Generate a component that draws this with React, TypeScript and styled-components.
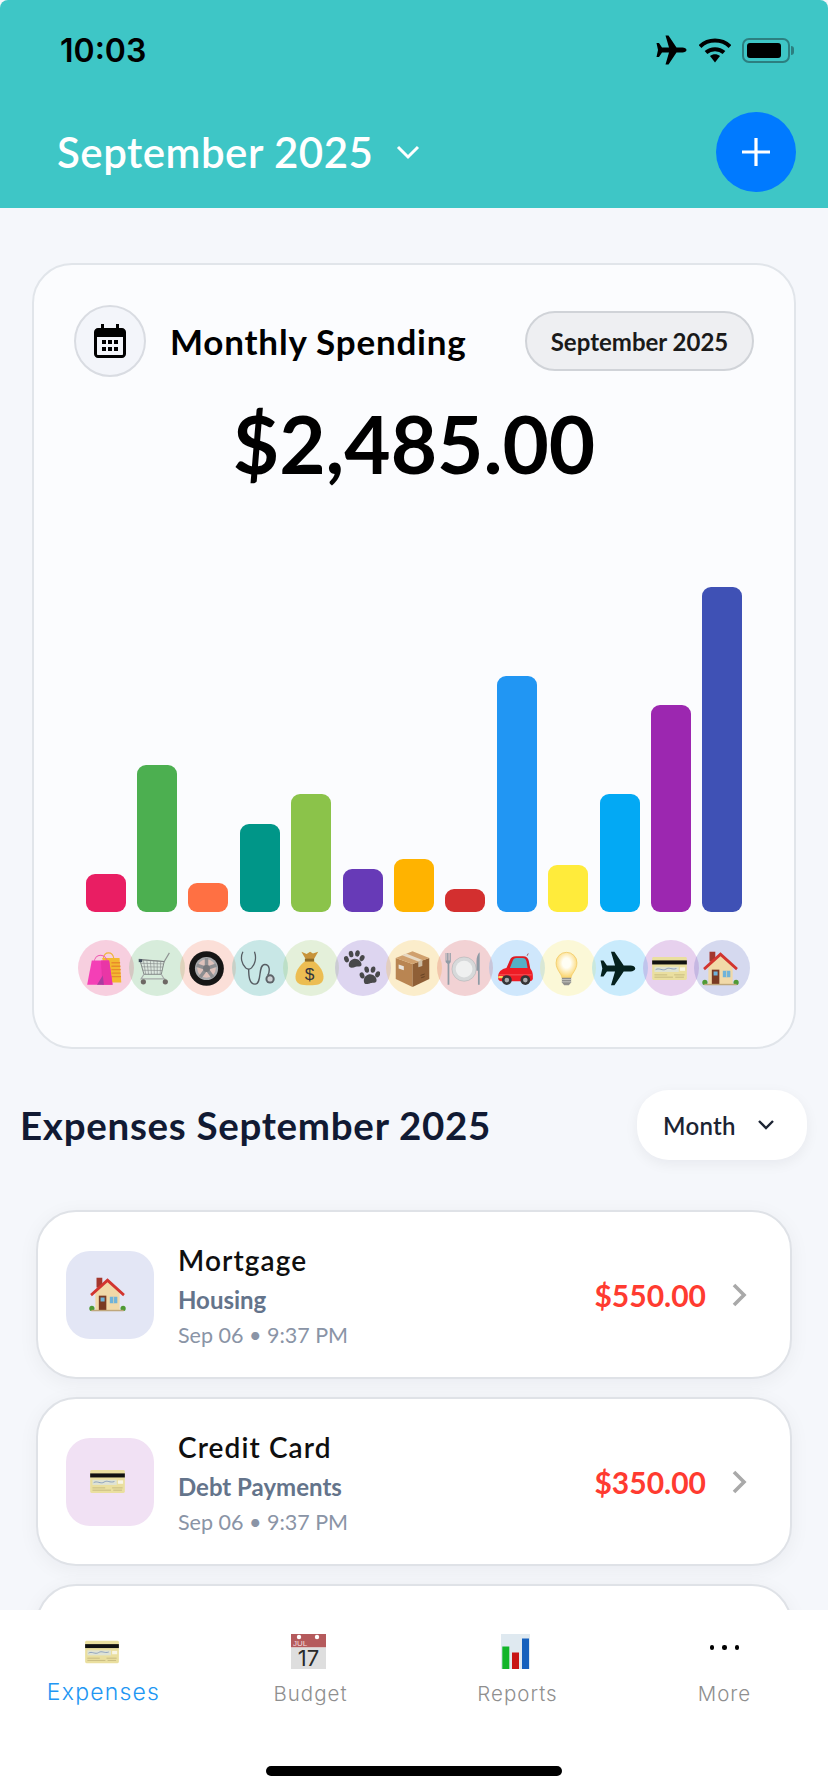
import React from "react";
import styled, { createGlobalStyle } from "styled-components";

const GlobalStyle = createGlobalStyle`
html, body {
    margin: 0;
    padding: 0;
    background: #ffffff;
}
* {
    box-sizing: border-box;
}
`;

const BagsEmoji = () => (
    <svg viewBox="0 0 64 64">
        <path d="M30 14c2-12 16-12 18 0" fill="none" stroke="#efb53a" strokeWidth="1.800" />
        <path d="M28 14h30l3 42H36z" fill="#f3b92f" />
        <path d="M44 22h15M44 28h15.500M44 34h16M44 40h16M44 46h16.500" stroke="#e98a2b" strokeWidth="2.400" />
        <path d="M14 22c1-17 21-17 23 0" fill="none" stroke="#ee58b0" strokeWidth="1.800" />
        <path d="M10 18h30l6 42H2z" fill="#f43fb6" />
        <path d="M26 18h14l6 42H28z" fill="#e936a6" />
        <path d="M26 18l3 26-10 16h12z" fill="#a93d9e" />
    </svg>
);

const CartEmoji = () => (
    <svg viewBox="0 0 64 64">
        <path d="M3 16l44 4 9-15" fill="none" stroke="#8f9393" strokeWidth="2" />
        <path d="M5 17l7 25h30l5-22z" fill="#dfe4e1" fillOpacity=".6" stroke="#777b7b" strokeWidth="1.500" />
        <path d="M11 17l4 25M17 18l3 24M23 18l2 24M29 19l1 23M35 19v23M41 20l-1 22M6 23l40 1M8 29l37 .5M9.500 35l34 .5" stroke="#7f8384" strokeWidth="1" />
        <path d="M3 16h6v5H3z" fill="#3f4a58" />
        <path d="M12 42l-5 8h42M42 42l6 10" fill="none" stroke="#a5a9a9" strokeWidth="2" />
        <circle cx="11" cy="55" r="4.500" fill="#6d6864" />
        <circle cx="49" cy="55" r="4.500" fill="#6d6864" />
    </svg>
);

const WheelEmoji = () => (
    <svg viewBox="0 0 64 64">
        <circle cx="32" cy="32" r="30" fill="#161616" />
        <circle cx="32" cy="32" r="20" fill="#a9abae" />
        <circle cx="32" cy="32" r="16" fill="#f0c9bf" fillOpacity=".75" />
        <path d="M32 32V14M32 32l17-6M32 32l11 15M32 32L21 47M32 32l-17-6" stroke="#8d8f92" strokeWidth="6" />
        <circle cx="32" cy="32" r="6" fill="#77797c" />
    </svg>
);

const StethoscopeEmoji = () => (
    <svg viewBox="0 0 64 64">
        <path d="M5 3C0 13 3 25 10 31c4 3 7 3 10 0 6-6 9-17 5-28" fill="none" stroke="#565c62" strokeWidth="2.200" />
        <path d="M15 33c0 12 1 26 11 26 13 0 4-34 17-34 9 0 9 12 5 19" fill="none" stroke="#565c62" strokeWidth="2.400" />
        <circle cx="52" cy="50" r="8" fill="#5d6368" />
        <circle cx="52" cy="50" r="4.500" fill="#cbd0d3" />
    </svg>
);

const MoneyBagEmoji = () => (
    <svg viewBox="0 0 64 64">
        <path d="M18 3l9 4 6-4 5 3 9-3-8 14H26z" fill="#c7933a" />
        <path d="M25 19h14c11 7 19 21 17 31-2 9-10 11-24 11S10 59 8 50c-2-10 6-24 17-31z" fill="#ecbd52" />
        <path d="M24 15h16v5H24z" fill="#8e6a24" />
        <text x="32" y="52" textAnchor="middle" fontFamily="Liberation Sans, sans-serif" fontSize="30" fill="#33363d">$</text>
    </svg>
);

const PawsEmoji = () => (
    <svg viewBox="0 0 64 64" fill="#48484a">
        <path d="M10 26c0-7 6-11 11-11s12 5 11 11c-1 4-6 2-10 3-5 2-12 3-12-3z" />
        <ellipse cx="6" cy="16" rx="4" ry="5.500" transform="rotate(-20 6 16)" />
        <ellipse cx="14" cy="7" rx="4" ry="5.500" transform="rotate(-10 14 7)" />
        <ellipse cx="25" cy="6" rx="4" ry="5.500" transform="rotate(10 25 6)" />
        <ellipse cx="33" cy="14" rx="4" ry="5.500" transform="rotate(25 33 14)" />
        <path d="M36 53c0-7 6-11 11-11s12 5 11 11c-1 5-6 3-10 4-5 2-12 4-12-4z" />
        <ellipse cx="33" cy="44" rx="4" ry="5.500" transform="rotate(-20 33 44)" />
        <ellipse cx="41" cy="34" rx="4" ry="5.500" transform="rotate(-10 41 34)" />
        <ellipse cx="52" cy="34" rx="4" ry="5.500" transform="rotate(10 52 34)" />
        <ellipse cx="60" cy="42" rx="4" ry="5.500" transform="rotate(25 60 42)" />
    </svg>
);

const BoxEmoji = () => (
    <svg viewBox="0 0 64 64">
        <path d="M32 24L3 14v36l29 14z" fill="#b98552" />
        <path d="M32 24l29-10v36L32 64z" fill="#8f5f36" />
        <path d="M3 14L32 2l29 12-29 10z" fill="#d0a06d" />
        <path d="M14 9l28 11 7-2.500L21 6z" fill="#e7d9c3" />
        <path d="M42 20l7-2.500v10l-7 2.500z" fill="#cdbda5" />
        <path d="M8 25l9 3v7l-9-3z" fill="#e9e4dc" />
        <path d="M46 44l7-2.500M47 48l6-2" stroke="#5f3e22" strokeWidth="1.500" />
    </svg>
);

const PlateEmoji = () => (
    <svg viewBox="0 0 64 64">
        <path d="M1 5h1.500v13h1V5H5v13h1V5h1.500v13h1V5H10v15c0 2-1.500 3-2.500 4v36h-3V24C3 23 1 22 1 20z" fill="#8f9ba5" />
        <circle cx="33" cy="33" r="21" fill="#d7d9da" stroke="#b0b3b5" strokeWidth="1" />
        <circle cx="33" cy="33" r="14.500" fill="#eff0f0" />
        <path d="M60 60h-3V36h-2.500V19c0-6 2-12 5.500-15z" fill="#8f9ba5" />
    </svg>
);

const CarEmoji = () => (
    <svg viewBox="0 0 64 64">
        <path d="M52 10l2-4" stroke="#9a3a3a" strokeWidth="1.400" />
        <path d="M15 34l7-16c2-5 5-7 11-7h12c6 0 9 3 10 8l3 15z" fill="#de1a22" />
        <path d="M22 32l5-13c1-3 3-5 7-5h10c4 0 6 2 7 6l2 12H22z" fill="#55b0c7" />
        <path d="M2 46c0-9 6-13 14-15h36c7 0 10 6 10 14v4c0 3-2 5-5 5H7c-3 0-5-2-5-5z" fill="#ee1c25" />
        <path d="M4 43h56" stroke="#f7696a" strokeWidth="1.400" />
        <rect x="2" y="45" width="9" height="4" rx="1.500" fill="#ffd35a" />
        <circle cx="17" cy="52" r="8.500" fill="#343436" />
        <circle cx="17" cy="52" r="4" fill="#a9abad" />
        <circle cx="49" cy="52" r="8.500" fill="#343436" />
        <circle cx="49" cy="52" r="4" fill="#a9abad" />
    </svg>
);

const BulbEmoji = () => (
    <svg viewBox="0 0 64 64">
        <defs>
            <radialGradient id="bulbGlow" cx="50%" cy="42%" r="55%">
                <stop offset="35%" stopColor="#fffef4" />
                <stop offset="100%" stopColor="#fbd774" />
            </radialGradient>
        </defs>
        <path d="M24 48c0-7-10-13-10-26a18 18 0 0 1 36 0c0 13-10 19-10 26z" fill="url(#bulbGlow)" stroke="#f2cc6a" strokeWidth="1.500" />
        <path d="M24 48h16v8l-4 5h-8l-4-5z" fill="#8f8f8c" />
        <path d="M24 51h16M24 55h16" stroke="#c9c9c6" strokeWidth="1.500" />
    </svg>
);

const PlaneEmoji = ({ fill = "#05211d" }: { fill?: string }) => (
    <svg viewBox="0 0 64 64">
        <path
            fill={fill}
            d="M61 32c0-3-4-5-8-5H41L25 3h-6l7 24H12L6 18H1l3 14-3 14h5l6-9h14l-7 24h6l16-24h12c4 0 8-2 8-5z"
        />
    </svg>
);

const CardEmoji = () => (
    <svg viewBox="0 0 64 64">
        <rect x="2" y="12" width="60" height="40" rx="2.500" fill="#eadf9f" />
        <rect x="2" y="18" width="60" height="7" fill="#111111" />
        <rect x="6" y="29" width="42" height="9" fill="#dfe3d4" />
        <path d="M8 34c6-4 12 3 18-1s10 2 18-1" fill="none" stroke="#7c93b8" strokeWidth="1.400" />
        <rect x="50" y="30" width="9" height="6" fill="#f8f5e4" />
        <path d="M6 43h22M6 47h32M40 43h18M42 47h15" stroke="#c4b67d" strokeWidth="1.500" />
    </svg>
);

const HouseEmoji = () => (
    <svg viewBox="0 0 64 64">
        <rect x="13" y="3" width="10" height="17" fill="#a3372d" />
        <path d="M11 28L32 10l21 18v31H11z" fill="#f1d9a8" />
        <path d="M32 4L2 31l3 4L32 11l27 24 3-4z" fill="#d2352f" />
        <path d="M17 34h13v25H17z" fill="#7a3a22" />
        <path d="M20 37h7v7h-7zM36 36h13v11H36z" fill="#6fb3d9" />
        <path d="M42.500 36v11" stroke="#f1d9a8" strokeWidth="1.200" />
        <circle cx="5" cy="56" r="4.500" fill="#4e9a35" />
        <circle cx="59" cy="56" r="4.500" fill="#4e9a35" />
        <rect x="4" y="58.500" width="56" height="2.500" fill="#bfa77c" />
    </svg>
);

const BudgetCalendarEmoji = () => (
    <svg viewBox="0 0 35 40">
        <rect x="0" y="0" width="35" height="13.500" fill="#b55a5c" />
        <rect x="0" y="13.500" width="35" height="21.500" fill="#dedede" />
        <circle cx="8" cy="3" r="2.200" fill="#ffffff" />
        <circle cx="26" cy="3" r="2.200" fill="#ffffff" />
        <text x="2" y="12" fontFamily="Liberation Sans, sans-serif" fontSize="8" fill="#f3dede">JUL</text>
        <text x="17.500" y="32" textAnchor="middle" fontFamily="Inter, sans-serif" fontSize="22" fill="#2a2a2a">17</text>
    </svg>
);

const ReportsChartEmoji = () => (
    <svg viewBox="0 0 29 35">
        <rect width="29" height="35" fill="#dfe9f0" />
        <rect x="1.300" y="12.500" width="7" height="22.500" fill="#12b52a" />
        <rect x="11" y="18.500" width="7" height="16.500" fill="#c81414" />
        <rect x="21" y="4.500" width="7" height="30.500" fill="#1560bd" />
    </svg>
);

const categories = [
    { name: "Shopping", color: "#E91E63", height: 38, Emoji: BagsEmoji },
    { name: "Groceries", color: "#4CAF50", height: 147, Emoji: CartEmoji },
    { name: "Auto", color: "#FF7043", height: 29, Emoji: WheelEmoji },
    { name: "Health", color: "#009688", height: 88, Emoji: StethoscopeEmoji },
    { name: "Savings", color: "#8BC34A", height: 118, Emoji: MoneyBagEmoji },
    { name: "Pets", color: "#673AB7", height: 43, Emoji: PawsEmoji },
    { name: "Supplies", color: "#FFB300", height: 53, Emoji: BoxEmoji },
    { name: "Dining", color: "#D32F2F", height: 23, Emoji: PlateEmoji },
    { name: "Car", color: "#2196F3", height: 236, Emoji: CarEmoji },
    { name: "Utilities", color: "#FFEB3B", height: 47, Emoji: BulbEmoji },
    { name: "Travel", color: "#03A9F4", height: 118, Emoji: PlaneEmoji },
    { name: "Debt", color: "#9C27B0", height: 207, Emoji: CardEmoji },
    { name: "Housing", color: "#3F51B5", height: 325, Emoji: HouseEmoji },
];

const expenses = [
    { title: "Mortgage", category: "Housing", date: "Sep 06 • 9:37 PM", amount: "$550.00", tint: "#E3E6F5", Emoji: HouseEmoji },
    { title: "Credit Card", category: "Debt Payments", date: "Sep 06 • 9:37 PM", amount: "$350.00", tint: "#F1E1F4", Emoji: CardEmoji },
];

const tabs = [
    { label: "Expenses", active: true, iconWidth: 36, iconHeight: 35, Emoji: CardEmoji },
    { label: "Budget", active: false, iconWidth: 35, iconHeight: 40, Emoji: BudgetCalendarEmoji },
    { label: "Reports", active: false, iconWidth: 29, iconHeight: 35, Emoji: ReportsChartEmoji },
];

export default function App() {
    return (
        <>
            <GlobalStyle />
            <Screen>
                <Header>
                    <StatusBar>
                        <Clock>10:03</Clock>
                        <StatusIcons>
                            <StatusPlane>
                                <PlaneEmoji fill="#000000" />
                            </StatusPlane>
                            <svg width="32" height="25" viewBox="0 0 32 25">
                                <path d="M1 8.500C9 .5 23 .5 31 8.500" fill="none" stroke="#000" strokeWidth="4" />
                                <path d="M7 14.500c5-4.500 13-4.500 18 0" fill="none" stroke="#000" strokeWidth="4" />
                                <path d="M11 18c3-2.500 7-2.500 10 0l-5 6.500z" fill="#000" />
                            </svg>
                            <BatteryShell>
                                <BatteryFill />
                            </BatteryShell>
                            <BatteryCap />
                        </StatusIcons>
                    </StatusBar>
                    <TitleRow>
                        <MonthTitle>September 2025</MonthTitle>
                        <svg width="24" height="16" viewBox="0 0 24 16">
                            <path d="M2 3l10 10L22 3" fill="none" stroke="#fff" strokeWidth="3" />
                        </svg>
                        <AddButton>
                            <svg width="28" height="28" viewBox="0 0 28 28">
                                <path d="M14 0v28M0 14h28" stroke="#fff" strokeWidth="3.200" />
                            </svg>
                        </AddButton>
                    </TitleRow>
                </Header>

                <Content>
                    <SpendingCard>
                        <SpendingHeader>
                            <CalendarBadge>
                                <svg width="32" height="34" viewBox="0 0 32 34">
                                    <path
                                        fillRule="evenodd"
                                        d="M7 0h3v4h12V0h3v4h3c2 0 4 2 4 4v22c0 2-2 4-4 4H4c-2 0-4-2-4-4V8c0-2 2-4 4-4h3zM3 13v17c0 .6.4 1 1 1h24c.6 0 1-.4 1-1V13zM8 16h4v4H8zm6 0h4v4h-4zm6 0h4v4h-4zM8 23h4v4H8zm6 0h4v4h-4zm6 0h4v4h-4z"
                                        fill="#000"
                                    />
                                </svg>
                            </CalendarBadge>
                            <SpendingTitle>Monthly Spending</SpendingTitle>
                            <PeriodPill>September 2025</PeriodPill>
                        </SpendingHeader>
                        <TotalAmount>$2,485.00</TotalAmount>
                        <Chart>
                            {categories.map(({ name, color, height, Emoji }) => (
                                <ChartColumn key={name}>
                                    <Bar $color={color} style={{ height }} />
                                    <CategoryDot $color={color}>
                                        <DotEmoji>
                                            <Emoji />
                                        </DotEmoji>
                                    </CategoryDot>
                                </ChartColumn>
                            ))}
                        </Chart>
                    </SpendingCard>

                    <SectionRow>
                        <SectionTitle>Expenses September 2025</SectionTitle>
                        <RangeSelect>
                            Month
                            <svg width="18" height="12" viewBox="0 0 18 12">
                                <path d="M2 2l7 7 7-7" fill="none" stroke="#1c2433" strokeWidth="2.400" />
                            </svg>
                        </RangeSelect>
                    </SectionRow>

                    <ExpenseList>
                        {expenses.map(({ title, category, date, amount, tint, Emoji }) => (
                            <ExpenseCard key={title}>
                                <ExpenseTile $tint={tint}>
                                    <TileEmoji>
                                        <Emoji />
                                    </TileEmoji>
                                </ExpenseTile>
                                <ExpenseText>
                                    <ExpenseTitle>{title}</ExpenseTitle>
                                    <ExpenseCategory>{category}</ExpenseCategory>
                                    <ExpenseDate>{date}</ExpenseDate>
                                </ExpenseText>
                                <ExpenseAmount>{amount}</ExpenseAmount>
                                <svg width="16" height="24" viewBox="0 0 16 24">
                                    <path d="M2 2l10 10L2 22" fill="none" stroke="#a9a9a9" strokeWidth="3.600" />
                                </svg>
                            </ExpenseCard>
                        ))}
                        <ExpenseCard />
                    </ExpenseList>
                </Content>

                <TabBar>
                    <TabRow>
                        {tabs.map(({ label, active, iconWidth, iconHeight, Emoji }) => (
                            <Tab key={label}>
                                <TabIcon $width={iconWidth} $height={iconHeight} $nudge={4}>
                                    <Emoji />
                                </TabIcon>
                                <TabLabel $active={active}>{label}</TabLabel>
                            </Tab>
                        ))}
                        <Tab>
                            <TabIcon $width={30} $height={35} $nudge={0}>
                                <MoreDots>
                                    <MoreDot />
                                    <MoreDot />
                                    <MoreDot />
                                </MoreDots>
                            </TabIcon>
                            <TabLabel $active={false}>More</TabLabel>
                        </Tab>
                    </TabRow>
                    <HomeIndicator />
                </TabBar>
            </Screen>
        </>
    );
}

const Screen = styled('div')`
width: 828px;
height: 1792px;
display: flex;
flex-direction: column;
overflow: hidden;
background-color: #f5f7fb;
font-family: "Lato", sans-serif;
`;

const Header = styled('header')`
flex: none;
height: 208px;
padding: 28px 32px 16px 57px;
background-color: #3ec6c6;
border-radius: 8px 8px 0 0;
`;

const StatusBar = styled('div')`
height: 44px;
display: flex;
align-items: center;
justify-content: space-between;
padding: 0 0 0 3px;
`;

const Clock = styled('span')`
font-family: "Inter", sans-serif;
font-size: 32px;
font-weight: 600;
color: #000;
`;

const StatusIcons = styled('div')`
display: flex;
align-items: center;
margin-right: 2px;
`;

const StatusPlane = styled('span')`
width: 32px;
height: 32px;
margin-right: 11px;
`;

const BatteryShell = styled('span')`
width: 48px;
height: 25px;
margin-left: 11px;
padding: 3px;
border: 2px solid #2c7f80;
border-radius: 7px;
`;

const BatteryFill = styled('span')`
display: block;
width: 34px;
height: 15px;
background-color: #000;
border-radius: 3px;
`;

const BatteryCap = styled('span')`
width: 3px;
height: 9px;
margin-left: 1px;
background-color: #2c7f80;
border-radius: 0 3px 3px 0;
`;

const TitleRow = styled('div')`
height: 80px;
margin-top: 40px;
display: flex;
align-items: center;
`;

const MonthTitle = styled('h1')`
margin: 0 23px 0 0;
font-size: 42px;
font-weight: 600;
letter-spacing: 0.5px;
color: #fff;
`;

const AddButton = styled('button')`
width: 80px;
height: 80px;
margin-left: auto;
display: flex;
align-items: center;
justify-content: center;
border: none;
border-radius: 50%;
background-color: #007aff;
`;

const Content = styled('main')`
flex: 1;
min-height: 0;
padding-top: 55px;
overflow: hidden;
`;

const SpendingCard = styled('section')`
width: 764px;
height: 786px;
margin-left: 32px;
padding: 40px 40px 0 40px;
background-color: #fbfcfe;
border: 2px solid #e1e5ea;
border-radius: 40px;
`;

const SpendingHeader = styled('div')`
display: flex;
align-items: center;
`;

const CalendarBadge = styled('div')`
width: 72px;
height: 72px;
display: flex;
align-items: center;
justify-content: center;
background-color: #f3f5fa;
border: 2px solid #d9dce2;
border-radius: 50%;
`;

const SpendingTitle = styled('h2')`
margin: 0 0 0 24px;
font-size: 35px;
font-weight: 700;
letter-spacing: 0.8px;
color: #000;
`;

const PeriodPill = styled('div')`
width: 229px;
height: 60px;
margin-left: auto;
display: flex;
align-items: center;
justify-content: center;
font-size: 24px;
font-weight: 700;
color: #1a1a1a;
background-color: #eeeff2;
border: 2px solid #d0d3d8;
border-radius: 30px;
`;

const TotalAmount = styled('div')`
margin-top: 16px;
text-align: center;
font-size: 80px;
line-height: 100px;
font-weight: 700;
color: #000;
`;

const Chart = styled('div')`
height: 478px;
margin: 25px 0 0 6px;
display: grid;
grid-template-columns: repeat(13, 51.4px);
`;

const ChartColumn = styled('div')`
display: flex;
flex-direction: column;
align-items: center;
justify-content: flex-end;
`;

const Bar = styled('div')<{ $color: string }>`
width: 40px;
background-color: ${props => props.$color};
border-radius: 9px;
`;

const CategoryDot = styled('div')<{ $color: string }>`
flex: none;
width: 56px;
height: 56px;
margin: 28px -3px 0;
display: flex;
align-items: center;
justify-content: center;
background-color: ${props => props.$color}33;
border-radius: 50%;
`;

const DotEmoji = styled('span')`
width: 37px;
height: 37px;
margin-right: 3px;
`;

const SectionRow = styled('div')`
height: 70px;
margin: 41px 21px 0 20px;
display: flex;
align-items: center;
justify-content: space-between;
`;

const SectionTitle = styled('h2')`
margin: 0;
font-size: 38.5px;
font-weight: 700;
letter-spacing: 0.7px;
color: #111a33;
`;

const RangeSelect = styled('div')`
width: 170px;
height: 70px;
padding: 0 32px 0 26px;
display: flex;
align-items: center;
justify-content: space-between;
font-size: 24px;
font-weight: 600;
letter-spacing: 0.3px;
color: #1c2433;
background-color: #fff;
border-radius: 32px;
box-shadow: 0 4px 14px rgba(15, 23, 42, 0.06);
`;

const ExpenseList = styled('div')`
margin: 50px 36px 0;
display: flex;
flex-direction: column;
gap: 18px;
`;

const ExpenseCard = styled('article')`
flex: none;
height: 169px;
padding: 0 42px 0 28px;
display: flex;
align-items: center;
background-color: #fff;
border: 2px solid #dfe2e7;
border-radius: 40px;
box-shadow: 0 4px 20px rgba(15, 23, 42, 0.05);
`;

const ExpenseTile = styled('div')<{ $tint: string }>`
flex: none;
width: 88px;
height: 88px;
display: flex;
align-items: center;
justify-content: center;
background-color: ${props => props.$tint};
border-radius: 24px;
`;

const TileEmoji = styled('span')`
width: 37px;
height: 37px;
margin-right: 5px;
`;

const ExpenseText = styled('div')`
margin-left: 24px;
display: flex;
flex-direction: column;
`;

const ExpenseTitle = styled('span')`
font-size: 28px;
line-height: 38px;
font-weight: 600;
letter-spacing: 1.1px;
color: #0f0f0f;
`;

const ExpenseCategory = styled('span')`
margin-top: 6px;
font-size: 24px;
line-height: 30px;
font-weight: 700;
color: #64748b;
`;

const ExpenseDate = styled('span')`
margin-top: 6px;
font-size: 21.5px;
line-height: 28px;
color: #8a94a6;
`;

const ExpenseAmount = styled('span')`
margin: 0 26px 0 auto;
font-size: 30px;
font-weight: 700;
color: #ff3b30;
`;

const TabBar = styled('nav')`
position: absolute;
top: 1610px;
left: 0;
width: 828px;
height: 182px;
background-color: #fff;
`;

const TabRow = styled('div')`
padding: 24px 0 0;
display: grid;
grid-template-columns: repeat(4, 207px);
`;

const Tab = styled('div')`
display: flex;
flex-direction: column;
align-items: center;
`;

const TabIcon = styled('div')<{ $width: number; $height: number; $nudge: number }>`
width: ${props => props.$width}px;
height: ${props => props.$height}px;
margin: 0 ${props => props.$nudge}px ${props => 35 - props.$height}px 0;
display: flex;
align-items: center;
justify-content: center;
`;

const TabLabel = styled('span')<{ $active: boolean }>`
margin-top: ${props => props.$active ? "9px" : "11px"};
font-family: "Inter", sans-serif;
font-size: ${props => props.$active ? "23px" : "20.5px"};
font-weight: 300;
line-height: 28px;
letter-spacing: ${props => props.$active ? "1.2px" : "1px"};
color: ${props => props.$active ? "#2196f3" : "#8f8f8f"};
`;

const MoreDots = styled('div')`
display: flex;
gap: 8px;
margin-top: -8px;
`;

const MoreDot = styled('span')`
width: 4.5px;
height: 4.5px;
background-color: #000;
border-radius: 50%;
`;

const HomeIndicator = styled('div')`
position: absolute;
left: 266px;
bottom: 16px;
width: 296px;
height: 10px;
background-color: #000;
border-radius: 5px;
`;
